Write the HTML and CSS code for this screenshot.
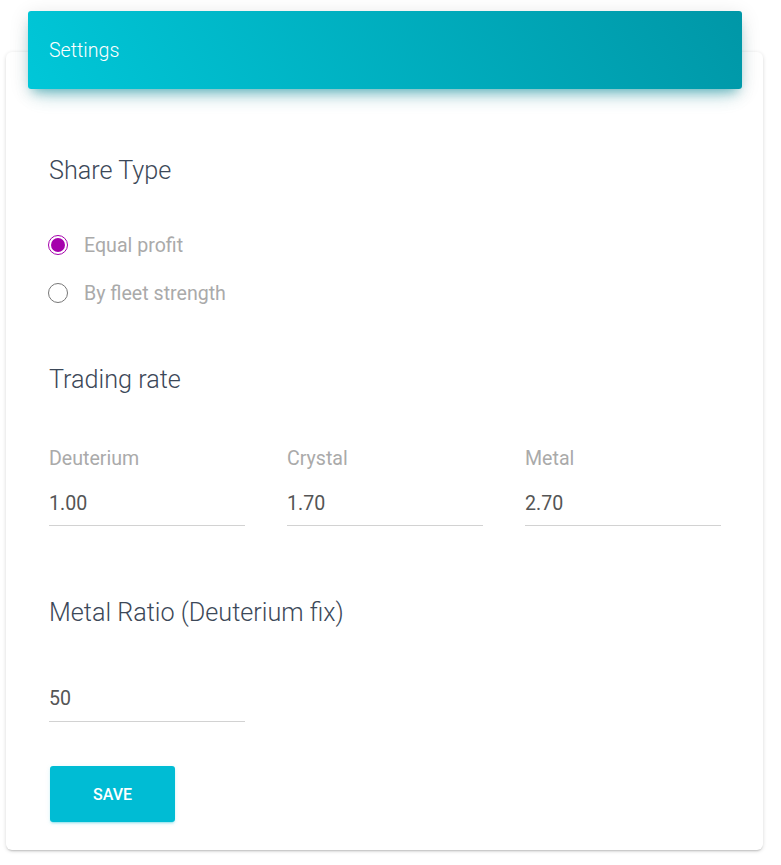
FILE: index.html
```html
<!DOCTYPE html>
<html>
<head>
<meta charset="utf-8">
<link rel="stylesheet" href="styles.css">
</head>
<body>
<div class="page">
  <div class="card">
    <div class="card-header">Settings</div>
    <div class="card-body">
      <h3 class="section-title share-title">Share Type</h3>
      <div class="radios">
        <label class="radio-row"><span class="radio checked"><span class="dot"></span></span><span class="radio-label">Equal profit</span></label>
        <label class="radio-row"><span class="radio"></span><span class="radio-label">By fleet strength</span></label>
      </div>
      <h3 class="section-title trade-title">Trading rate</h3>
      <div class="fields">
        <div class="field"><div class="field-label">Deuterium</div><div class="field-value">1.00</div></div>
        <div class="field"><div class="field-label">Crystal</div><div class="field-value">1.70</div></div>
        <div class="field"><div class="field-label">Metal</div><div class="field-value">2.70</div></div>
      </div>
      <h3 class="section-title ratio-title">Metal Ratio (Deuterium fix)</h3>
      <div class="fields single">
        <div class="field"><div class="field-value ratio-value">50</div></div>
      </div>
      <button class="save-btn">SAVE</button>
    </div>
  </div>
</div>
</body>
</html>
```

FILE: styles.css
```css
* { box-sizing: border-box; }
html, body { margin: 0; padding: 0; background: #fff; }
body { font-family: Roboto, "Noto Sans", Arial, sans-serif; }
.page { padding: 52px 18px 15px 6px; }
.card {
  display: flow-root;
  background: #fff;
  border-radius: 6px;
  box-shadow: 0 1px 4px 0 rgba(0,0,0,0.14), 0 2px 2px -1px rgba(0,0,0,0.18);
}
.card-header {
  margin: -41px 21px 0 22px;
  height: 78px;
  padding: 29px 21px 27px;
  font-size: 19.6px;
  line-height: 22px;
  font-weight: 300;
  color: #fff;
  border-radius: 3px;
  background: linear-gradient(60deg, #00c7d8, #0097a7);
  box-shadow: 0 4px 20px 0 rgba(0,0,0,0.12), 0 12px 20px -8px rgba(0,172,193,0.3), 0 7px 10px -5px rgba(0,150,165,0.45);
}
.card-body { padding: 0 42px 28px 43px; }
.section-title {
  margin: 0;
  font-size: 25.2px;
  line-height: 30px;
  font-weight: 300;
  color: #3c4858;
}
.share-title { padding-top: 67px; }
.radios { margin-top: 35px; }
.radio-row {
  display: flex;
  align-items: center;
  height: 48px;
}
.radio {
  width: 20px;
  height: 20px;
  border-radius: 50%;
  border: 1px solid #777;
  margin-left: -1px;
  display: flex;
  align-items: center;
  justify-content: center;
  flex: none;
}
.radio.checked { border-color: #a500ac; }
.radio .dot {
  width: 14px;
  height: 14px;
  border-radius: 50%;
  background: #a500ac;
}
.radio-label {
  margin-left: 16px;
  font-size: 19.6px;
  color: #aaaaaa;
}
.trade-title { margin-top: 48px; }
.fields {
  display: grid;
  grid-template-columns: repeat(3, 196px);
  column-gap: 42px;
  margin-top: 53px;
}
.field-label {
  font-size: 19.6px;
  line-height: 22px;
  color: #aaaaaa;
}
.field-value {
  margin-top: 23px;
  font-size: 19.6px;
  line-height: 22px;
  color: #555555;
  padding-bottom: 10px;
  border-bottom: 1px solid #d2d2d2;
}
.ratio-title { margin-top: 72px; }
.fields.single { margin-top: 60px; }
.ratio-value { margin-top: 0; padding-bottom: 11px; }
.save-btn {
  display: block;
  margin-top: 44px;
  margin-left: 1px;
  width: 125px;
  height: 56px;
  border: none;
  border-radius: 3px;
  background: #00bcd4;
  color: #fff;
  font-family: Roboto, "Noto Sans", Arial, sans-serif;
  font-size: 16px;
  font-weight: 500;
  box-shadow: 0 2px 2px 0 rgba(0,188,212,0.14), 0 3px 1px -2px rgba(0,188,212,0.2), 0 1px 5px 0 rgba(0,188,212,0.12);
}
```
